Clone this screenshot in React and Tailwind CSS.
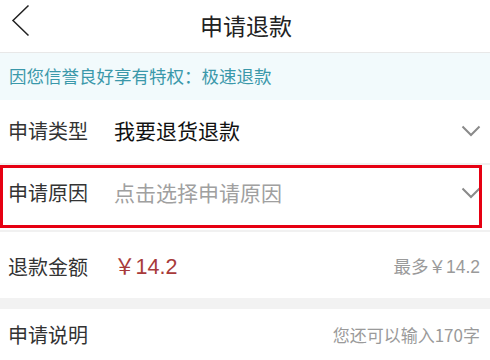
const font = { fontFamily: '"Noto Sans CJK SC", "Noto Sans", sans-serif' };
const numFont = { fontFamily: '"Liberation Sans", "Noto Sans CJK SC", sans-serif' };

const Arrow = () => (
  <svg width="20" height="12" viewBox="0 0 20 12" className="shrink-0">
    <path d="M1.5 1.5 L10 10 L18.5 1.5" fill="none" stroke="#8a8a8a" strokeWidth="2" />
  </svg>
);

const App = () => {
  return (
    <div className="w-[490px] h-[360px] overflow-hidden bg-white" style={font}>
      {/* header */}
      <div className="relative h-[53px] flex items-center justify-center border-b border-[#e8e8e8]">
        <svg width="20" height="34" viewBox="0 0 20 34" className="absolute left-[11px] top-[4px]">
          <path d="M17.5 1.5 L2 16.5 L17.5 31.5" fill="none" stroke="#222" strokeWidth="1.5" />
        </svg>
        <h1 className="text-[23px] text-[#222] leading-none -mt-[2px] pl-[2px]">申请退款</h1>
      </div>

      {/* banner */}
      <div className="h-[47px] flex items-center pl-[9px] bg-[#f2fafc] text-[17.5px] text-[#3a98aa]">
        因您信誉良好享有特权：极速退款
      </div>

      {/* type */}
      <div className="h-[65px] flex items-center pl-[8px] pr-[9px] border-b-2 border-[#f1f1f1] pb-[2px]">
        <span className="w-[106px] text-[20px] text-[#333]">申请类型</span>
        <span className="flex-1 text-[21px] text-[#111]">我要退货退款</span>
        <Arrow />
      </div>

      {/* reason */}
      <div className="relative h-[67px] flex items-center pl-[8px] pr-[9px] pb-[10px] border-b-2 border-[#f1f1f1]">
        <span className="w-[106px] text-[20px] text-[#333]">申请原因</span>
        <span className="flex-1 text-[21px] text-[#a0a0a0]">点击选择申请原因</span>
        <Arrow />
        <div className="absolute left-0 top-0 right-[8px] bottom-[2px] border-[3px] border-[#e60012] pointer-events-none" />
      </div>

      {/* amount */}
      <div className="h-[66px] flex items-center pl-[8px] pr-[10px] pt-[4px]">
        <span className="w-[106px] text-[20px] text-[#333]">退款金额</span>
        <span className="flex-1 text-[21.5px] text-[#a83a3a]" style={numFont}>
          ￥14.2
        </span>
        <span className="text-[17.5px] text-[#9a9a9a]" style={numFont}>
          最多￥14.2
        </span>
      </div>

      <div className="h-[11px] bg-[#f2f2f2]" />

      {/* note */}
      <div className="h-[52px] flex items-center pl-[8px] pr-[10px]">
        <span className="flex-1 text-[20px] text-[#333]">申请说明</span>
        <span className="text-[17px] text-[#9a9a9a]">您还可以输入170字</span>
      </div>
    </div>
  );
};

export default App;
